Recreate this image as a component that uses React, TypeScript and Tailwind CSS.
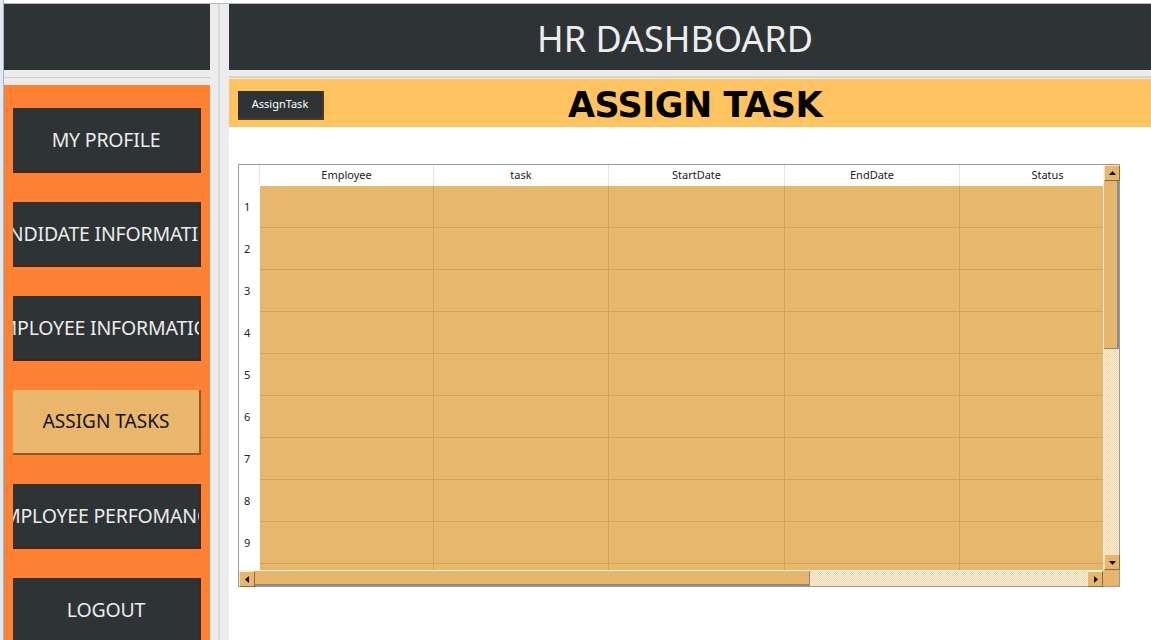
const menu = [
  { label: "MY PROFILE", active: false },
  { label: "CANDIDATE INFORMATION", active: false },
  { label: "EMPLOYEE INFORMATION", active: false },
  { label: "ASSIGN TASKS", active: true },
  { label: "EMPLOYEE PERFOMANCE", active: false },
  { label: "LOGOUT", active: false },
];

const columns = ["Employee", "task", "StartDate", "EndDate", "Status"];
const rows = [1, 2, 3, 4, 5, 6, 7, 8, 9, 10];

function Arrow({ dir }: { dir: "up" | "down" | "left" | "right" }) {
  const points = {
    up: "1,6 4.5,2 8,6",
    down: "1,3 4.5,7 8,3",
    left: "6,1 2,4.5 6,8",
    right: "3,1 7,4.5 3,8",
  }[dir];
  return (
    <div className="w-[16px] h-[16px] shrink-0 flex items-center justify-center bg-[#e6b66c] border border-t-[#fbe6bd] border-l-[#fbe6bd] border-r-[#8a6a38] border-b-[#8a6a38]">
      <svg width="9" height="9" viewBox="0 0 9 9">
        <polygon points={points} fill="#111" />
      </svg>
    </div>
  );
}

export default function App() {
  return (
    <main className="flex w-[1151px] h-[640px] overflow-hidden bg-white font-['Noto_Sans',sans-serif]">
      <div className="w-[4px] h-full bg-[#e3e9ee] border-r border-[#9fb4c4]" />
      <div className="flex-1 flex flex-col">
        <div className="h-[4px] shrink-0 bg-white border-b border-[#b8b8b8]" />
        <div className="flex flex-1 min-h-0">
          {/* sidebar */}
          <section className="w-[206px] flex flex-col">
            <div className="h-[66px] shrink-0 bg-[#2e3336]" />
            <div className="h-[15px] shrink-0 bg-[#ececec] flex flex-col">
              <div className="h-[7px]" />
              <div className="h-[1px] bg-[#cfcfcf]" />
            </div>
            <div className="flex-1 min-h-0 overflow-hidden bg-[#ff8133] flex flex-col gap-[29px] pt-[23px] pl-[9px] pr-[9px]">
              {menu.map((m) => (
                <div
                  key={m.label}
                  className={
                    m.active
                      ? "h-[65px] shrink-0 flex items-center justify-center overflow-hidden whitespace-nowrap bg-[#e8b76c] border-r-2 border-b-2 border-[#8f5a22] text-[#111] text-[19px]"
                      : "h-[65px] shrink-0 flex items-center justify-center overflow-hidden whitespace-nowrap bg-[#2e3336] border-r-2 border-b-2 border-[#4a2410] text-[#ececec] text-[19.5px] tracking-[-0.2px]"
                  }
                >
                  {m.label}
                </div>
              ))}
            </div>
          </section>

          {/* divider */}
          <div className="w-[19px] bg-[#ececec] flex">
            <div className="w-[8px]" />
            <div className="w-[2px] bg-[#d9d9d9]" />
          </div>

          {/* content */}
          <section className="flex-1 flex flex-col">
            <header className="h-[66px] shrink-0 bg-[#2e3336] flex items-center justify-center text-[#ededed] text-[36px] pr-[30px] pt-[4px]">
              HR DASHBOARD
            </header>
            <div className="h-[9px] shrink-0 bg-[#ececec] flex flex-col">
              <div className="h-[6px]" />
              <div className="h-[2px] bg-[#d6d2ca]" />
            </div>
            <div className="h-[48px] shrink-0 bg-[#ffc35f] grid grid-cols-[1fr_auto_1fr] items-center">
              <div className="pl-[9px]">
                <button className="w-[86px] h-[29px] bg-[#2e3336] border-r-2 border-b-2 border-[#4a3a20] text-white text-[11px]">
                  AssignTask
                </button>
              </div>
              <h1 className="font-bold text-[35px] text-black pl-[10px] font-['DejaVu_Sans',sans-serif] tracking-[-0.5px]">
                ASSIGN TASK
              </h1>
              <div />
            </div>

            <div className="pt-[37px] pl-[9px]">
              <div className="w-[882px] h-[423px] border border-[#9a9a9a] flex flex-col bg-white">
                <div className="flex h-[405px]">
                  <div className="w-[864px] h-full overflow-hidden flex flex-col">
                    <div className="grid grid-cols-[21px_174px_175px_176px_175px_176px] h-[21px] shrink-0 text-[11px] text-[#222] bg-white">
                      <div className="border-r border-[#e4e4e4]" />
                      {columns.map((c) => (
                        <div
                          key={c}
                          className="flex items-center justify-center border-r border-[#e4e4e4]"
                        >
                          {c}
                        </div>
                      ))}
                    </div>
                    {rows.map((r) => (
                      <div
                        key={r}
                        className="grid grid-cols-[21px_174px_175px_176px_175px_176px] h-[42px] shrink-0 text-[11px] text-[#222]"
                      >
                        <div className="bg-white flex items-center pl-[5px]">{r}</div>
                        {columns.map((c) => (
                          <div
                            key={c}
                            className="bg-[#e6b76d] border-r border-b border-[#d3a25a]"
                          />
                        ))}
                      </div>
                    ))}
                  </div>
                  <div className="w-[16px] h-full flex flex-col bg-[repeating-conic-gradient(#efd3a4_0_25%,#fbf1de_0_50%)] bg-[length:2px_2px] border-l border-[#fdf3dc]">
                    <Arrow dir="up" />
                    <div className="h-[168px] shrink-0 bg-[#e6b66c] border-r-2 border-b border-[#8a8a8a]" />
                    <div className="flex-1" />
                    <Arrow dir="down" />
                  </div>
                </div>
                <div className="flex h-[16px]">
                  <div className="w-[864px] flex bg-[repeating-conic-gradient(#efd3a4_0_25%,#fbf1de_0_50%)] bg-[length:2px_2px] border-t border-[#fdf3dc]">
                    <Arrow dir="left" />
                    <div className="w-[555px] bg-[#e6b66c] border-b-2 border-r border-[#8a8a8a]" />
                    <div className="flex-1" />
                    <Arrow dir="right" />
                  </div>
                  <div className="w-[16px] bg-[#e6b66c]" />
                </div>
              </div>
            </div>
          </section>
        </div>
      </div>
    </main>
  );
}
